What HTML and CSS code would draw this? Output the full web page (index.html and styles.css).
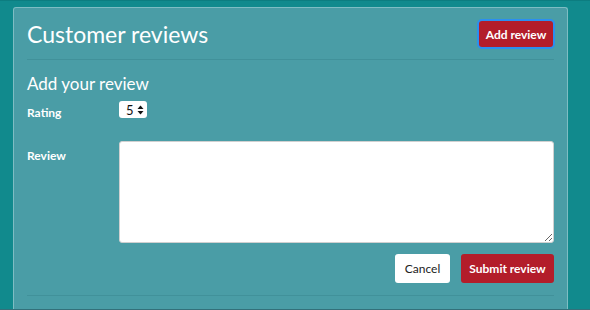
FILE: index.html
```html
<!DOCTYPE html>
<html lang="en">

<head>
  <link rel="stylesheet" href="styles.css">
</head>

<body>
  <div class="panel">
    <div class="header">
      <h1>Customer reviews</h1>
      <button class="btn btnRed btnFocus">Add review</button>
    </div>
    <h2>Add your review</h2>
    <div class="row">
      <label class="label labelRating">Rating</label>
      <div class="select">
        <span>5</span>
        <svg width="7" height="10" viewBox="0 0 7 10">
          <path d="M3.5 0.5 L6.5 4 L0.5 4 Z" fill="#111" />
          <path d="M3.5 9.5 L6.5 6 L0.5 6 Z" fill="#111" />
        </svg>
      </div>
    </div>
    <div class="row reviewRow">
      <label class="label labelReview">Review</label>
      <textarea class="review"></textarea>
    </div>
    <div class="actions">
      <button class="btn btnWhite">Cancel</button>
      <button class="btn btnRed">Submit review</button>
    </div>
  </div>
</body>

</html>
```

FILE: styles.css
```css
body {
  margin: 0;
  padding: 6px 0 0 0;
  font-family: Lato, "Open Sans", Arial, sans-serif;
  background: #118a8d;
  border-top: 1px solid #0d7d80;
  border-bottom: 1px solid #33707a;
  height: 310px;
  box-sizing: border-box;
  overflow: hidden;
}

.panel {
  width: 527px;
  margin-left: 13px;
  padding: 0 13px;
  background: #4a9da6;
  border: 1px solid #7ebdc3;
  border-bottom: none;
  border-radius: 3px 3px 0 0;
  height: 301px;
  box-sizing: content-box;
  color: #fff;
}

.header {
  display: flex;
  align-items: center;
  justify-content: space-between;
  padding: 12px 0 11px 0;
  border-bottom: 1px solid #41919a;
}

.header h1 {
  margin: 0;
  font-size: 23px;
  font-weight: normal;
  line-height: 28px;
}

h2 {
  margin: 13px 0 4px 0;
  font-size: 17px;
  font-weight: normal;
  line-height: 22px;
}

.btn {
  height: 29px;
  padding: 0;
  border: none;
  border-radius: 3px;
  font-family: Lato, "Open Sans", Arial, sans-serif;
  font-size: 12px;
  font-weight: bold;
  white-space: nowrap;
}

.btnRed {
  background-color: #b31d2a;
  color: #fff;
}

.btnFocus {
  height: 26px;
  width: 74px;
  margin-right: 1px;
  box-shadow: 0 0 0 2px #2b8ff0;
}

.btnWhite {
  background-color: #fff;
  color: #222;
  font-weight: normal;
  width: 55px;
}

.row {
  display: flex;
  align-items: center;
}

.label {
  width: 92px;
  font-size: 12px;
  font-weight: bold;
}

.labelRating {
  margin-top: 6px;
}

.select {
  display: flex;
  align-items: center;
  gap: 3px;
  height: 17px;
  padding: 0 3px 0 7px;
  background: #fff;
  border-radius: 3px;
  color: #111;
  font-size: 13px;
}

.reviewRow {
  align-items: flex-start;
  margin-top: 21px;
}

.labelReview {
  margin-top: 7px;
}

.review {
  width: 435px;
  height: 102px;
  margin: 0;
  padding: 0;
  border: 1px solid #d0d0d0;
  border-radius: 3px;
  box-sizing: border-box;
  background: #fff;
}

.actions {
  display: flex;
  justify-content: flex-end;
  gap: 11px;
  padding: 11px 0 12px 0;
  border-bottom: 1px solid #41919a;
}

.actions .btnRed {
  width: 93px;
}
```
